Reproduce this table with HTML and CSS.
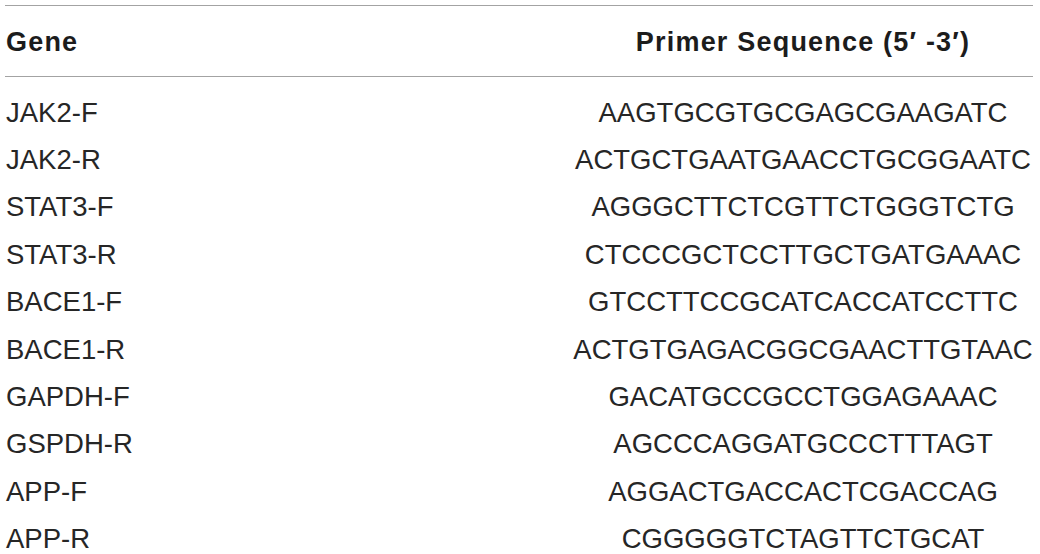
FILE: index.html
```html
<!DOCTYPE html>
<html>
<head>
<meta charset="utf-8">
<link rel="stylesheet" href="styles.css">
</head>
<body>
<div class="table">
  <div class="row head">
    <div class="gene">Gene</div>
    <div class="seq">Primer Sequence (5′ -3′)</div>
  </div>
  <div class="body">
    <div class="row"><div class="gene">JAK2-F</div><div class="seq">AAGTGCGTGCGAGCGAAGATC</div></div>
    <div class="row"><div class="gene">JAK2-R</div><div class="seq">ACTGCTGAATGAACCTGCGGAATC</div></div>
    <div class="row"><div class="gene">STAT3-F</div><div class="seq">AGGGCTTCTCGTTCTGGGTCTG</div></div>
    <div class="row"><div class="gene">STAT3-R</div><div class="seq">CTCCCGCTCCTTGCTGATGAAAC</div></div>
    <div class="row"><div class="gene">BACE1-F</div><div class="seq">GTCCTTCCGCATCACCATCCTTC</div></div>
    <div class="row"><div class="gene">BACE1-R</div><div class="seq">ACTGTGAGACGGCGAACTTGTAAC</div></div>
    <div class="row"><div class="gene">GAPDH-F</div><div class="seq">GACATGCCGCCTGGAGAAAC</div></div>
    <div class="row"><div class="gene">GSPDH-R</div><div class="seq">AGCCCAGGATGCCCTTTAGT</div></div>
    <div class="row"><div class="gene">APP-F</div><div class="seq">AGGACTGACCACTCGACCAG</div></div>
    <div class="row"><div class="gene">APP-R</div><div class="seq">CGGGGGTCTAGTTCTGCAT</div></div>
  </div>
</div>
</body>
</html>
```
FILE: styles.css
```css
html, body {
  margin: 0;
  padding: 0;
  background: #ffffff;
}
body {
  font-family: "Liberation Sans", Arial, sans-serif;
  overflow: hidden;
}
.table {
  margin: 5px 0 0 5px;
  width: 1028px;
}
.row {
  display: grid;
  grid-template-columns: 568px 460px;
  font-size: 27.5px;
  line-height: 47.4px;
  color: #262626;
  white-space: nowrap;
}
.head {
  border-top: 1px solid #a3a3a3;
  border-bottom: 1px solid #a3a3a3;
  padding-top: 2px;
  font-size: 27px;
  font-weight: bold;
  line-height: 68px;
  letter-spacing: 1.2px;
  color: #1c1c1c;
}
.body {
  padding-top: 11.5px;
}
.gene {
  padding-left: 1px;
}
.seq {
  text-align: center;
}
```
